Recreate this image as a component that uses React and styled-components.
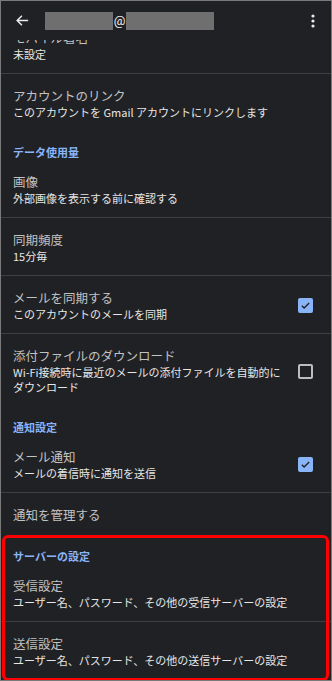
import React from "react";
import styled, { createGlobalStyle } from "styled-components";

const Global = createGlobalStyle`
  html, body { margin: 0; padding: 0; background: #202124; }
  * { box-sizing: border-box; }
`;

const Screen = styled.div`
  width: 332px;
  height: 681px;
  border: 1px solid #7a7a7a;
  background: #202124;
  overflow: hidden;
  font-family: "Noto Sans CJK JP", "Noto Sans", Roboto, sans-serif;
  display: flex;
  flex-direction: column;
`;

const AppBar = styled.div`
  position: relative;
  z-index: 2;
  height: 39px;
  flex: none;
  display: flex;
  align-items: center;
  padding: 0 0 0 13px;
  background: #202124;
`;

const IconButton = styled.div`
  width: 16px;
  height: 16px;
  display: flex;
  align-items: center;
  justify-content: center;
  color: #e8eaed;
`;

const Account = styled.div`
  display: flex;
  align-items: center;
  margin-left: 15px;
  flex: 1;
`;

const Redact = styled.div`
  width: ${(p) => p.$w}px;
  height: 18px;
  background: #6f6f6f;
`;

const At = styled.span`
  width: 13px;
  text-align: center;
  color: #f2f2f2;
  font-size: 13px;
  font-family: Roboto, "Noto Sans", sans-serif;
  line-height: 18px;
`;

const Menu = styled.div`
  width: 16px;
  margin-right: 10px;
  display: flex;
  justify-content: center;
  color: #e8eaed;
`;

const List = styled.div`
  margin-top: -24px;
  display: flex;
  flex-direction: column;
`;

const Item = styled.div`
  display: flex;
  align-items: center;
  padding: ${(p) => (p.$afterHeader ? "12px" : "13px")} 18px 11px 12px;
  border-bottom: ${(p) => (p.$divider ? "1px solid #3e3f42" : "none")};
`;

const Texts = styled.div`
  flex: 1;
  min-width: 0;
  padding-right: 12px;
`;

const Title = styled.div`
  font-size: 12.5px;
  line-height: 18px;
  color: #c2c2c2;
`;

const Summary = styled.div`
  font-size: 11px;
  line-height: 15px;
  color: #e6e6e6;
`;

const SectionHeader = styled.div`
  padding: 12px 12px 0;
  font-size: 11px;
  line-height: 18px;
  font-weight: 700;
  color: #8ab4f8;
`;

const Box = styled.div`
  width: 15px;
  height: 15px;
  flex: none;
  border-radius: 2px;
  display: flex;
  align-items: center;
  justify-content: center;
  background: ${(p) => (p.$checked ? "#8ab4f8" : "transparent")};
  border: ${(p) => (p.$checked ? "none" : "2px solid #bdbdbd")};
`;

const Highlight = styled.div`
  position: relative;
  &::after {
    content: "";
    position: absolute;
    top: 0;
    left: 1px;
    right: 2px;
    height: 140px;
    border: 3px solid #ff0000;
    border-radius: 6px;
    pointer-events: none;
  }
`;

const Checkbox = ({ checked }) => (
  <Box $checked={checked}>
    {checked && (
      <svg width="11" height="11" viewBox="0 0 24 24">
        <path d="M4 12.5l5 5L20 6.5" fill="none" stroke="#202124" strokeWidth="3" />
      </svg>
    )}
  </Box>
);

const Row = ({ title, summary, check, divider = true, afterHeader }) => (
  <Item $divider={divider} $afterHeader={afterHeader}>
    <Texts>
      <Title>{title}</Title>
      {summary && <Summary>{summary}</Summary>}
    </Texts>
    {check !== undefined && <Checkbox checked={check} />}
  </Item>
);

export default function App() {
  return (
    <>
      <Global />
      <Screen>
        <AppBar>
          <IconButton>
            <svg width="15" height="15" viewBox="0 0 24 24">
              <path d="M21 12H4M11 4.5L3.5 12l7.5 7.5" fill="none" stroke="currentColor" strokeWidth="2.4" />
            </svg>
          </IconButton>
          <Account>
            <Redact $w={68} />
            <At>@</At>
            <Redact $w={88} />
          </Account>
          <Menu>
            <svg width="4" height="14" viewBox="0 0 4 14">
              <circle cx="2" cy="2" r="1.6" fill="currentColor" />
              <circle cx="2" cy="7" r="1.6" fill="currentColor" />
              <circle cx="2" cy="12" r="1.6" fill="currentColor" />
            </svg>
          </Menu>
        </AppBar>
        <List>
          <Row title="モバイル署名" summary="未設定" />
          <Row
            title="アカウントのリンク"
            summary="このアカウントを Gmail アカウントにリンクします"
            divider={false}
          />
          <SectionHeader>データ使用量</SectionHeader>
          <Row afterHeader title="画像" summary="外部画像を表示する前に確認する" />
          <Row title="同期頻度" summary="15分毎" />
          <Row title="メールを同期する" summary="このアカウントのメールを同期" check={true} />
          <Row
            title="添付ファイルのダウンロード"
            summary="Wi-Fi接続時に最近のメールの添付ファイルを自動的にダウンロード"
            check={false}
            divider={false}
          />
          <SectionHeader>通知設定</SectionHeader>
          <Row afterHeader title="メール通知" summary="メールの着信時に通知を送信" check={true} />
          <Row title="通知を管理する" divider={false} />
          <Highlight>
            <SectionHeader>サーバーの設定</SectionHeader>
            <Row
              afterHeader
              title="受信設定"
              summary="ユーザー名、パスワード、その他の受信サーバーの設定"
            />
            <Row
              title="送信設定"
              summary="ユーザー名、パスワード、その他の送信サーバーの設定"
              divider={false}
            />
          </Highlight>
        </List>
      </Screen>
    </>
  );
}
